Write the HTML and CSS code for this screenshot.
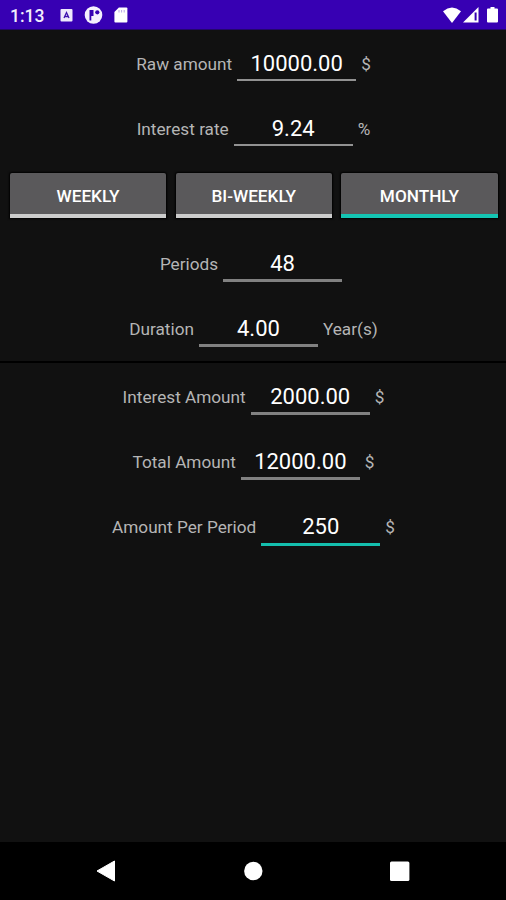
FILE: index.html
```html
<!DOCTYPE html>
<html lang="en">
<head>
<meta charset="utf-8">
<title>Loan calculator</title>
<link rel="stylesheet" href="styles.css">
</head>
<body>
<header class="status">
  <span class="time">1:13</span>
  <svg class="left-icons" width="70" height="20" viewBox="0 0 70 20">
    <rect x="1.500" y="4" width="12" height="12.5" rx="1" fill="#eee9fc"/>
    <path d="M5 13 7.500 7.500l2.500 5.500M6 11.500h3" fill="none" stroke="#3d12ae" stroke-width="1.300"/>
    <circle cx="34.500" cy="10" r="8.8" fill="#f4f0fd"/>
    <path d="M30.500 5h4v6h-2.200v4.500h-1.800z" fill="#3500b2"/>
    <circle cx="38.300" cy="7.300" r="2.100" fill="#3500b2"/>
    <path d="M59.900 2.5H67.400q1 0 1 1v13q0 1-1 1H56.400q-1 0-1-1V7z" fill="#fff"/>
    <path d="M60 5v2.500M62.600 5v2.500M65.200 5v2.500" stroke="#b9a5e6" stroke-width="1"/>
  </svg>
  <svg class="right-icons" width="58" height="20" viewBox="0 0 58 20">
    <path d="M1 6.2Q10 -1 19 6.2L10 18z" fill="#fff"/>
    <path d="M36.500 2v15.500H21z" fill="#fff"/>
    <path d="M33.600 7.500v8" stroke="#3500b2" stroke-width="2"/>
    <path d="M48.500 2h4v1.500H55q1 0 1 1v12q0 1-1 1h-9q-1 0-1-1v-12q0-1 1-1h2.500z" fill="#fff"/>
  </svg>
</header>
<main class="content">
  <section class="inputs">
    <div class="row"><span class="label">Raw amount</span><span class="field thin">10000.00</span><span class="label">$</span></div>
    <div class="row"><span class="label">Interest rate</span><span class="field thin">9.24</span><span class="label">%</span></div>
    <div class="toggles">
      <button class="toggle">WEEKLY</button>
      <button class="toggle">BI-WEEKLY</button>
      <button class="toggle on">MONTHLY</button>
    </div>
    <div class="row"><span class="label">Periods</span><span class="field">48</span></div>
    <div class="row"><span class="label">Duration</span><span class="field">4.00</span><span class="label">Year(s)</span></div>
  </section>
  <section class="results">
    <div class="row"><span class="label">Interest Amount</span><span class="field">2000.00</span><span class="label">$</span></div>
    <div class="row"><span class="label">Total Amount</span><span class="field">12000.00</span><span class="label">$</span></div>
    <div class="row"><span class="label">Amount Per Period</span><span class="field focus">250</span><span class="label">$</span></div>
  </section>
</main>
<nav class="nav">
  <svg width="20" height="22" viewBox="0 0 20 22"><path d="M18.500 1v20L1 11z" fill="#fff" stroke="#fff" stroke-linejoin="round"/></svg>
  <svg width="20" height="22" viewBox="0 0 20 22"><circle cx="10.300" cy="11" r="9.200" fill="#fff"/></svg>
  <svg width="20" height="22" viewBox="0 0 20 22"><rect x="0" y="1.500" width="19.400" height="19.400" rx="1.500" fill="#fff"/></svg>
</nav>
</body>
</html>
```
FILE: styles.css
```css
* { box-sizing: border-box; }

body {
  margin: 0;
  height: 900px;
  display: flex;
  flex-direction: column;
  overflow: hidden;
  background: #111;
  color: #fff;
  font-family: Roboto, "Liberation Sans", sans-serif;
}

.status {
  height: 30px;
  flex: none;
  display: flex;
  align-items: center;
  padding: 1px 6px 0 10px;
  background: #3700b3;
  border-bottom: 1px solid #24066c;
}

.time {
  width: 49px;
  padding-top: 1px;
  font-size: 17.5px;
  font-weight: 500;
  color: #f2eefc;
}

.right-icons { margin-left: auto; }

.content { flex: 1; }

.row {
  height: 65.4px;
  padding: 19px 0 0 1px;
  display: flex;
  justify-content: center;
  align-items: baseline;
}

.label {
  font-size: 17.2px;
  color: #b5b5b5;
  transform: translateY(-1px);
}

.field {
  width: 119px;
  height: 33px;
  margin: 0 5px;
  border-bottom: 3px solid #818181;
  font-size: 22px;
  line-height: 30px;
  text-align: center;
}

.field.thin { height: 32px; border-bottom: 2px solid #929292; }
.field.focus { height: 34px; border-color: #14bfae; }

.toggles {
  display: flex;
  gap: 9.5px;
  height: 69px;
  padding: 12px 8.5px 12px 10px;
}

.toggle {
  flex: 1;
  margin: 0;
  padding: 5px 0 0;
  border: 0;
  border-bottom: 4px solid #ccc;
  border-radius: 2px 2px 0 0;
  background: #5a595b;
  box-shadow: 0 0 2px 1px #000;
  color: #fff;
  font: 500 17.2px Roboto, "Liberation Sans", sans-serif;
}

.toggle.on { border-color: #14c4b2; }

.results { border-top: 2px solid #000; }

.nav {
  height: 58px;
  flex: none;
  display: flex;
  justify-content: space-between;
  align-items: center;
  padding: 0 96.500px 0 96px;
  background: #000;
}
```
